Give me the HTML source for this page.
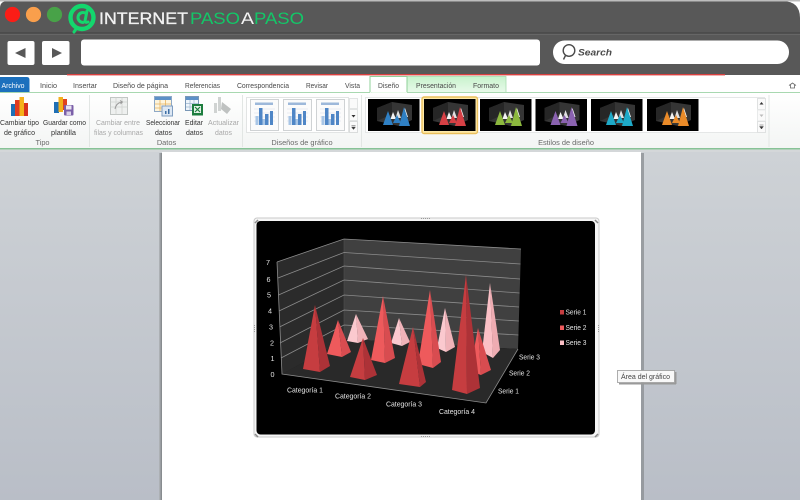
<!DOCTYPE html>
<html lang="es">
<head>
<meta charset="utf-8">
<title>Word - Diseño de gráfico</title>
<style>
html,body{margin:0;padding:0;width:800px;height:500px;overflow:hidden;background:#fff}
svg{display:block;font-family:"Liberation Sans",sans-serif}
.tab{font-size:7.6px;fill:#4a4a4a}
.rb{font-size:7px;fill:#333}
.gr{font-size:7px;fill:#a8a8a8}
.gl{font-size:7.4px;fill:#6a6a6a;text-anchor:middle}
.ax{font-size:7.2px;fill:#e4e4e4}
</style>
</head>
<body>
<svg width="800" height="500" viewBox="0 0 800 500" xmlns="http://www.w3.org/2000/svg">
<defs>
<linearGradient id="bg" x1="0" y1="0" x2="0" y2="1"><stop offset="0" stop-color="#ced2d6"/><stop offset="1" stop-color="#b9bec7"/></linearGradient>
<linearGradient id="rib" x1="0" y1="0" x2="0" y2="1"><stop offset="0" stop-color="#fff"/><stop offset="1" stop-color="#f3f5f4"/></linearGradient>
<linearGradient id="ctx" x1="0" y1="0" x2="0" y2="1"><stop offset="0" stop-color="#c6f2cb"/><stop offset="1" stop-color="#eafaeb"/></linearGradient>
<linearGradient id="shadow" x1="0" y1="0" x2="1" y2="0"><stop offset="0" stop-color="#b5b9bd"/><stop offset="1" stop-color="#7f8386"/></linearGradient>
<g id="thumb">
  <rect x="0" y="0" width="51.500" height="32" fill="#000"/>
  <path d="M9 9L24 3L44 6V21L31 27L9 22Z" fill="#353535"/>
  <path d="M24 3V15L9 22V9Z" fill="#262626"/>
</g>
<g id="cones">
  <path d="M25 13L28 20H22.500Z" fill="#f4f4f4"/><path d="M30 11L33 19H27.500Z" fill="#f4f4f4" opacity=".9"/>
  <path d="M37 9L40 18H34Z" fill="#f4f4f4"/>
  <path d="M20 12L25 26H15Z"/><path d="M29 16L33 24H25Z"/><path d="M36 8L42 27H31Z"/>
</g>
<g id="miniLayout">
  <rect x=".5" y=".5" width="28" height="31" fill="#fbfbfb" stroke="#cfd2d4"/>
  <rect x="5" y="3.500" width="18" height="2.500" fill="#9db8da"/>
  <path d="M4 10H25M4 14H25M4 18H25M4 22H25" stroke="#d5dce6" stroke-width=".6"/>
  <path d="M9 9h3.500v17H9zM15 15h3.500v11H15zM20 12h3v14h-3z" fill="#4f86c6"/>
  <path d="M5.500 17h3v9h-3zM12.500 20h2.500v6h-2.500z" fill="#a9c6e6"/>
</g>
</defs>

<!-- browser chrome -->
<rect width="800" height="500" fill="#fff"/>
<path d="M0 75V8Q0 1 8 1H782Q800 1 800 18V75Z" fill="#585858"/>
<rect x="0" y="0" width="800" height="1.500" fill="#bdbdbd"/>
<rect x="0" y="32.500" width="800" height="1.200" fill="#3f3f3f"/>
<rect x="0" y="33.700" width="800" height="1" fill="#6d6d6d"/>
<circle cx="12.500" cy="14.500" r="7.600" fill="#fb1d16"/>
<circle cx="33.500" cy="14.500" r="7.600" fill="#f99f4c"/>
<circle cx="54.500" cy="14.500" r="7.600" fill="#48a248"/>
<circle cx="82" cy="17.500" r="11.500" fill="none" stroke="#13d76d" stroke-width="4.400"/>
<path d="M76 29L74 32M86 13.500a5 5 0 1 0-3 9M87 11L85 21Q85 23 88 22" fill="none" stroke="#13d76d" stroke-width="3" stroke-linecap="round"/>
<text x="99" y="24" font-size="16.600" fill="#f2f2f2" stroke="#f2f2f2" stroke-width=".3" textLength="89" lengthAdjust="spacingAndGlyphs">INTERNET</text>
<text x="190" y="24" font-size="16.600" fill="#13c768" textLength="50" lengthAdjust="spacingAndGlyphs">PASO</text>
<text x="241" y="24" font-size="16.600" fill="#f2f2f2" textLength="13" lengthAdjust="spacingAndGlyphs">A</text>
<text x="254" y="24" font-size="16.600" fill="#13c768" textLength="50" lengthAdjust="spacingAndGlyphs">PASO</text>

<rect x="7.500" y="41" width="27" height="24" rx="2" fill="#fff"/>
<path d="M15 53L25.500 48V58Z" fill="#585858"/>
<rect x="42" y="41" width="27.500" height="24" rx="2" fill="#fff"/>
<path d="M62 53L52 48V58Z" fill="#585858"/>
<rect x="81" y="39.500" width="459" height="26" rx="3" fill="#fff"/>
<rect x="553" y="40.500" width="236" height="23.500" rx="11.500" fill="#fff"/>
<circle cx="569" cy="50.500" r="5.800" fill="none" stroke="#4a4a4a" stroke-width="1.400"/>
<path d="M565.500 55.500L563.500 59.500" stroke="#4a4a4a" stroke-width="1.400"/>
<text x="578" y="55.500" font-size="9.500" font-weight="bold" font-style="italic" fill="#4a4a4a" textLength="34" lengthAdjust="spacingAndGlyphs">Search</text>

<!-- tabs -->
<rect x="67" y="74" width="658" height="1.400" fill="#d8403f"/>
<rect x="0" y="76" width="800" height="17" fill="#fff"/>
<rect x="371" y="76" width="135" height="17" fill="url(#ctx)"/>
<path d="M371 92.500V76.500H506V92.500" fill="none" stroke="#a9dcb0" stroke-width=".8"/>
<path d="M0 77H27Q29.500 77 29.500 80V92H0Z" fill="#1c70bd"/>
<text x="1.500" y="88" font-size="7.600" fill="#fff" textLength="23" lengthAdjust="spacingAndGlyphs">Archivo</text>
<text class="tab" x="40" y="88" textLength="17" lengthAdjust="spacingAndGlyphs">Inicio</text>
<text class="tab" x="73" y="88" textLength="24" lengthAdjust="spacingAndGlyphs">Insertar</text>
<text class="tab" x="113" y="88" textLength="55" lengthAdjust="spacingAndGlyphs">Diseño de página</text>
<text class="tab" x="185" y="88" textLength="35" lengthAdjust="spacingAndGlyphs">Referencias</text>
<text class="tab" x="237" y="88" textLength="52" lengthAdjust="spacingAndGlyphs">Correspondencia</text>
<text class="tab" x="306" y="88" textLength="22" lengthAdjust="spacingAndGlyphs">Revisar</text>
<text class="tab" x="345" y="88" textLength="15" lengthAdjust="spacingAndGlyphs">Vista</text>
<path d="M370 92V76.500H407V92" fill="#fff" stroke="#8fd09a" stroke-width="1"/>
<text class="tab" x="378" y="88" textLength="21" lengthAdjust="spacingAndGlyphs">Diseño</text>
<text class="tab" x="416" y="88" textLength="40" lengthAdjust="spacingAndGlyphs">Presentación</text>
<text class="tab" x="473" y="88" textLength="26" lengthAdjust="spacingAndGlyphs">Formato</text>
<path d="M0 92.500H370M407 92.500H800" stroke="#a8d8b0" stroke-width="1"/>
<path d="M789 85.500L792.500 83L796 85.500M790.500 85V88H794.500V85" fill="none" stroke="#666" stroke-width=".8"/>

<!-- ribbon -->
<rect x="0" y="93" width="800" height="55" fill="url(#rib)"/>
<rect x="0" y="148" width="800" height="1.600" fill="#86c296"/>
<rect x="0" y="149.600" width="800" height="2.400" fill="#d4d7d9"/>
<path d="M89.500 95V147M242.500 95V147M361.500 95V147M769 95V147" stroke="#e2e6e4" stroke-width="1"/>

<!-- Tipo icons -->
<rect x="11" y="104" width="5" height="12" fill="#1e6fb5"/>
<rect x="15" y="100" width="5" height="16" fill="#e13b20"/>
<rect x="19.500" y="97" width="4.500" height="19" fill="#f5b21a"/>
<rect x="24" y="103" width="4" height="13" fill="#d8331e"/>
<rect x="54" y="102" width="5" height="11" fill="#1e6fb5"/>
<rect x="58.500" y="97" width="4.500" height="15" fill="#f2b01d"/>
<rect x="63" y="99" width="4" height="11" fill="#e0431f"/>
<rect x="64" y="105" width="9.500" height="10.500" rx="1" fill="#7a5fa8"/>
<rect x="66" y="105.500" width="5.500" height="4" fill="#e9e4f2"/>
<rect x="66.500" y="111.500" width="4.500" height="3.500" fill="#d8d0e6"/>
<text class="rb" x="0" y="125" textLength="39" lengthAdjust="spacingAndGlyphs">Cambiar tipo</text>
<text class="rb" x="4" y="135" textLength="31" lengthAdjust="spacingAndGlyphs">de gráfico</text>
<text class="rb" x="43" y="125" textLength="43" lengthAdjust="spacingAndGlyphs">Guardar como</text>
<text class="rb" x="51" y="135" textLength="25" lengthAdjust="spacingAndGlyphs">plantilla</text>
<text class="gl" x="42.500" y="145">Tipo</text>

<!-- Datos icons -->
<rect x="110.500" y="97.500" width="17" height="17" fill="#eef0ef" stroke="#c2c6c4"/>
<path d="M110.500 102H127.500M110.500 107H127.500M116 97.500V114.500M122 97.500V114.500" stroke="#cfd2d0" stroke-width=".8"/>
<path d="M115 109Q116 103 122 102M120 100.500L122.500 102L120.500 104" fill="none" stroke="#9a9a9a" stroke-width=".9"/>
<rect x="154.500" y="96.500" width="17" height="15" fill="#fdf4dc" stroke="#8fa9c6"/>
<rect x="155" y="97" width="16" height="3" fill="#5d90c8"/>
<path d="M155 104H171M155 108H171M160 100V111M165.500 100V111" stroke="#e8b460" stroke-width=".8"/>
<rect x="162" y="106" width="10.500" height="10" fill="#dce7f3" stroke="#7f9dbf"/>
<path d="M165 114v-3h1.500v3zM168 114v-5h1.500v5z" fill="#3e6fa5"/>
<rect x="185.500" y="96.500" width="13" height="14" fill="#eff5fb" stroke="#7a97b6"/>
<rect x="186" y="97" width="12" height="3" fill="#5d90c8"/>
<path d="M186 103.500H198M186 107H198M190 100V110M194 100V110" stroke="#9fb6cf" stroke-width=".7"/>
<rect x="192" y="104" width="11" height="11.500" fill="#1d7d3f"/>
<rect x="194" y="106" width="7" height="7" fill="#e5f3e8"/>
<path d="M195 107L200 112M200 107L195 112" stroke="#1d7d3f" stroke-width="1.200"/>
<path d="M214 103h3v10h-3zM218 97h3v14h-3z" fill="#d0d3d2"/>
<path d="M222 102L231 109L227 114L221 109Z" fill="#bfc2c1"/>
<text class="gr" x="96" y="125" textLength="44" lengthAdjust="spacingAndGlyphs">Cambiar entre</text>
<text class="gr" x="94" y="135" textLength="49" lengthAdjust="spacingAndGlyphs">filas y columnas</text>
<text class="rb" x="146" y="125" textLength="34" lengthAdjust="spacingAndGlyphs">Seleccionar</text>
<text class="rb" x="155" y="135" textLength="17" lengthAdjust="spacingAndGlyphs">datos</text>
<text class="rb" x="185" y="125" textLength="18" lengthAdjust="spacingAndGlyphs">Editar</text>
<text class="rb" x="186" y="135" textLength="17" lengthAdjust="spacingAndGlyphs">datos</text>
<text class="gr" x="208" y="125" textLength="31" lengthAdjust="spacingAndGlyphs">Actualizar</text>
<text class="gr" x="215" y="135" textLength="17" lengthAdjust="spacingAndGlyphs">datos</text>
<text class="gl" x="166.500" y="145">Datos</text>

<!-- Diseños de gráfico -->
<rect x="246.500" y="97.500" width="102" height="35" fill="#fff" stroke="#e2e4e4"/>
<use href="#miniLayout" x="250" y="99"/>
<use href="#miniLayout" x="283" y="99"/>
<use href="#miniLayout" x="316" y="99"/>
<rect x="349.500" y="98.500" width="8" height="10" fill="#fafafa" stroke="#e2e4e4"/>
<rect x="349.500" y="109.500" width="8" height="11" fill="#fafafa" stroke="#e2e4e4"/>
<rect x="349.500" y="121.500" width="8" height="11" fill="#fafafa" stroke="#dadcdc"/>
<path d="M351.500 115H355.500L353.500 117.500Z" fill="#333"/>
<path d="M351.500 125.500H355.500M351.500 127H355.500L353.500 129.500Z" stroke="#555" stroke-width=".5" fill="#333"/>
<text class="gl" x="302" y="145">Diseños de gráfico</text>

<!-- Estilos -->
<rect x="365.500" y="97.500" width="399" height="35" fill="#fff" stroke="#e5e7e7"/>
<rect x="422" y="97" width="55.500" height="36.500" rx="2" fill="#fde9a9" stroke="#eabf5b" stroke-width="1.400"/>
<use href="#thumb" x="368" y="99"/><use href="#cones" x="368" y="99" fill="#2f80c4"/>
<use href="#thumb" x="424" y="99"/><use href="#cones" x="424" y="99" fill="#d64045"/>
<use href="#thumb" x="480" y="99"/><use href="#cones" x="480" y="99" fill="#8cb83e"/>
<use href="#thumb" x="535.500" y="99"/><use href="#cones" x="535.500" y="99" fill="#8a62b0"/>
<use href="#thumb" x="591" y="99"/><use href="#cones" x="591" y="99" fill="#1eaac8"/>
<use href="#thumb" x="647" y="99"/><use href="#cones" x="647" y="99" fill="#e98a28"/>
<rect x="757.500" y="98.500" width="8" height="11" fill="#fafafa" stroke="#dfe1e1"/>
<rect x="757.500" y="110" width="8" height="11" fill="#fafafa" stroke="#e8eaea"/>
<rect x="757.500" y="121.500" width="8" height="11" fill="#fafafa" stroke="#dfe1e1"/>
<path d="M759.500 104.500H763.500L761.500 102Z" fill="#333"/>
<path d="M759.500 114.500H763.500L761.500 117Z" fill="#bbb"/>
<path d="M759.500 125H763.500M759.500 126.500H763.500L761.500 129Z" stroke="#555" stroke-width=".5" fill="#333"/>
<text class="gl" x="566" y="145">Estilos de diseño</text>

<!-- document area -->
<rect x="0" y="152" width="800" height="348" fill="url(#bg)"/>
<rect x="159" y="153" width="3" height="347" fill="url(#shadow)"/>
<rect x="641" y="153" width="3" height="347" fill="#8d9195" opacity=".8"/>
<rect x="162" y="152" width="479" height="348" fill="#fff"/>

<!-- chart frame -->
<rect x="254" y="218" width="345" height="219" rx="3" fill="#f6f6f6" stroke="#c9c9c9"/>
<rect x="256.500" y="221" width="338.500" height="213.500" rx="4" fill="#000"/>
<path d="M421 218.500h9M421 436.500h9M254.500 325v8M598.500 325v8" stroke="#9a9a9a" stroke-width="1" stroke-dasharray="1 1"/>
<path d="M255 223L258 220M255 434L258 437M595 220L598 223M595 437L598 434" stroke="#8a8a8a" stroke-width="1.500"/>

<!-- chart walls -->
<path d="M277 262L344 239L521 249L518 349L345 339L282 374Z" fill="#404040"/>
<path d="M277 262L344 239V339L282 374Z" fill="#2b2b2b"/>
<path d="M344 239V339" stroke="#4f4f4f" stroke-width=".6"/>
<path d="M282 374L345 339L518 349L486 403Z" fill="#292929"/>
<g fill="none" stroke="#8c8c8c" stroke-width=".8">
  <path d="M277 262L344 239L521 249"/>
  <path d="M278 278L344 252.500L520.500 264"/>
  <path d="M278.500 295L344 266L520 279"/>
  <path d="M279 311L344 280L519.500 293"/>
  <path d="M279.500 327L344 295L519 307"/>
  <path d="M280 343L344 310L518.800 321"/>
  <path d="M281 358L344 325L518.400 335"/>
  <path d="M277 262L282 374L486 403L518 349"/>
</g>
<text class="ax" x="266" y="265">7</text>
<text class="ax" x="266.500" y="282">6</text>
<text class="ax" x="267" y="297.500">5</text>
<text class="ax" x="268" y="313.500">4</text>
<text class="ax" x="269" y="329.500">3</text>
<text class="ax" x="270" y="345.500">2</text>
<text class="ax" x="270.500" y="361">1</text>
<text class="ax" x="270.500" y="377">0</text>

<!-- Series 3 -->
<g>
<path d="M356 314L347 341L358 343Z" fill="#fbc9cf"/><path d="M356 314L358 343L368 339Z" fill="#f0b3b9"/>
<path d="M399 318L391 343L402 346Z" fill="#fbc9cf"/><path d="M399 318L402 346L410 342Z" fill="#f0b3b9"/>
<path d="M445 308L437 348L446 352Z" fill="#fbc9cf"/><path d="M445 308L446 352L455 347Z" fill="#f0b3b9"/>
<path d="M490 283L482 352L493 358Z" fill="#fbc0c6"/><path d="M490 283L493 358L500 350Z" fill="#eeacb2"/>
</g>
<!-- Series 2 -->
<g>
<path d="M338 320L327 354L342 357Z" fill="#ee5a5c"/><path d="M338 320L342 357L351 352Z" fill="#d84c50"/>
<path d="M383 296L371 360L385 363Z" fill="#ee5a5c"/><path d="M383 296L385 363L395 358Z" fill="#d84c50"/>
<path d="M430 290L418 364L433 368Z" fill="#ee5a5c"/><path d="M430 290L433 368L441 362Z" fill="#d84c50"/>
<path d="M478 328L470 371L481 375Z" fill="#ee5a5c"/><path d="M478 328L481 375L491 370Z" fill="#d84c50"/>
</g>
<!-- Series 1 -->
<g>
<path d="M315 305L303 369L320 372Z" fill="#c63d40"/><path d="M315 305L320 372L330 366Z" fill="#ad3237"/>
<path d="M363 338L350 377L365 380Z" fill="#c63d40"/><path d="M363 338L365 380L377 375Z" fill="#ad3237"/>
<path d="M413 327L399 384L420 387Z" fill="#c63d40"/><path d="M413 327L420 387L426 382Z" fill="#ad3237"/>
<path d="M466 275L452 390L467 394Z" fill="#c63d40"/><path d="M466 275L467 394L480 388Z" fill="#ad3237"/>
</g>

<!-- axis labels -->
<text class="ax" x="287" y="392.500" textLength="36" lengthAdjust="spacingAndGlyphs">Categoría 1</text>
<text class="ax" x="335" y="398.500" textLength="36" lengthAdjust="spacingAndGlyphs">Categoría 2</text>
<text class="ax" x="386" y="406.500" textLength="36" lengthAdjust="spacingAndGlyphs">Categoría 3</text>
<text class="ax" x="439" y="414" textLength="36" lengthAdjust="spacingAndGlyphs">Categoría 4</text>
<text class="ax" x="498" y="393.500" textLength="21" lengthAdjust="spacingAndGlyphs">Serie 1</text>
<text class="ax" x="509" y="375.500" textLength="21" lengthAdjust="spacingAndGlyphs">Serie 2</text>
<text class="ax" x="519" y="359.500" textLength="21" lengthAdjust="spacingAndGlyphs">Serie 3</text>

<!-- legend -->
<rect x="560" y="310" width="4" height="4.500" fill="#c63d40"/>
<rect x="560" y="325.500" width="4" height="4.500" fill="#ee5a5c"/>
<rect x="560" y="340.500" width="4" height="4.500" fill="#fbc0c6"/>
<text class="ax" x="565.500" y="314.500" textLength="21" lengthAdjust="spacingAndGlyphs">Serie 1</text>
<text class="ax" x="565.500" y="330" textLength="21" lengthAdjust="spacingAndGlyphs">Serie 2</text>
<text class="ax" x="565.500" y="345" textLength="21" lengthAdjust="spacingAndGlyphs">Serie 3</text>

<!-- tooltip -->
<rect x="617.500" y="370.500" width="57" height="12" fill="#f8f8f8" stroke="#9a9a9a" stroke-width=".8"/>
<rect x="675" y="372" width="1.500" height="12" fill="#999"/>
<rect x="619" y="383" width="57" height="1.500" fill="#999"/>
<text x="621" y="379" font-size="7.400" fill="#444" textLength="49" lengthAdjust="spacingAndGlyphs">Área del gráfico</text>
</svg>
</body>
</html>
